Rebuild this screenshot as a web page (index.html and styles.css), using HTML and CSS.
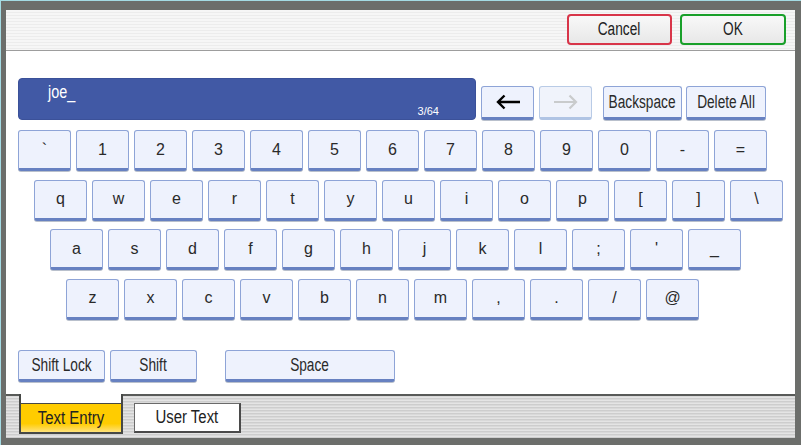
FILE: index.html
```html
<!DOCTYPE html>
<html>
<head>
<meta charset="utf-8">
<link rel="stylesheet" href="styles.css">
</head>
<body>
<div class="screen">
  <div class="inner">
    <div class="topbar">
      <div class="tbtn cancel"><span class="lbl">Cancel</span></div>
      <div class="tbtn ok"><span class="lbl">OK</span></div>
    </div>
    <div class="panel">
      <div class="entry-row">
        <div class="field">
          <span class="val lbl">joe_</span>
          <span class="count">3/64</span>
        </div>
        <div class="key arrow">
          <svg width="26" height="16" viewBox="0 0 26 16"><path d="M25 8H3M9.5 1.5L3 8l6.5 6.5" fill="none" stroke="#000" stroke-width="2.4"/></svg>
        </div>
        <div class="key arrow disabled">
          <svg width="26" height="16" viewBox="0 0 26 16"><path d="M1 8H23M16.5 1.5L23 8l-6.5 6.5" fill="none" stroke="#c9cbcc" stroke-width="2.2"/></svg>
        </div>
        <div class="key cmd bs"><span class="lbl">Backspace</span></div>
        <div class="key cmd da"><span class="lbl">Delete All</span></div>
      </div>
      <div class="keys">
        <div class="row r1">
          <div class="key">`</div><div class="key">1</div><div class="key">2</div><div class="key">3</div><div class="key">4</div><div class="key">5</div><div class="key">6</div><div class="key">7</div><div class="key">8</div><div class="key">9</div><div class="key">0</div><div class="key">-</div><div class="key">=</div>
        </div>
        <div class="row r2">
          <div class="key">q</div><div class="key">w</div><div class="key">e</div><div class="key">r</div><div class="key">t</div><div class="key">y</div><div class="key">u</div><div class="key">i</div><div class="key">o</div><div class="key">p</div><div class="key">[</div><div class="key">]</div><div class="key">\</div>
        </div>
        <div class="row r3">
          <div class="key">a</div><div class="key">s</div><div class="key">d</div><div class="key">f</div><div class="key">g</div><div class="key">h</div><div class="key">j</div><div class="key">k</div><div class="key">l</div><div class="key">;</div><div class="key">'</div><div class="key">_</div>
        </div>
        <div class="row r4">
          <div class="key">z</div><div class="key">x</div><div class="key">c</div><div class="key">v</div><div class="key">b</div><div class="key">n</div><div class="key">m</div><div class="key">,</div><div class="key">.</div><div class="key">/</div><div class="key">@</div>
        </div>
      </div>
      <div class="bottom-row">
        <div class="key mod"><span class="lbl">Shift Lock</span></div>
        <div class="key mod"><span class="lbl">Shift</span></div>
        <div class="key space"><span class="lbl">Space</span></div>
      </div>
    </div>
    <div class="tabs">
      <div class="tab active"><div class="tab-face"><span class="lbl wide">Text Entry</span></div></div>
      <div class="tab plain"><span class="lbl wide">User Text</span></div>
    </div>
  </div>
</div>
</body>
</html>
```

FILE: styles.css
```css
html, body {
  margin: 0;
  padding: 0;
}
body {
  width: 801px;
  height: 445px;
  overflow: hidden;
  background: #6c6e6b;
  font-family: "Liberation Sans", Arial, sans-serif;
  color: #222;
}
.lbl {
  display: inline-block;
  white-space: nowrap;
  transform: scaleX(0.76);
}
.lbl.wide {
  transform: scaleX(0.83);
}
.screen {
  box-sizing: border-box;
  width: 801px;
  height: 445px;
  border-top: 1px solid #a4dbe3;
  border-left: 1px solid #a4dbe3;
  padding: 9px 6px 7px 5px;
}
.inner {
  width: 789px;
  height: 428px;
  display: flex;
  flex-direction: column;
  background: #fff;
}
.topbar {
  box-sizing: border-box;
  height: 41px;
  flex: none;
  border-bottom: 1px solid #9d9d9d;
  background: repeating-linear-gradient(to bottom, #f6f6f6 0 2px, #ececec 2px 3px);
  display: flex;
  justify-content: flex-end;
  gap: 8px;
  padding: 4px 9px 0 0;
}
.tbtn {
  box-sizing: border-box;
  width: 105px;
  height: 31px;
  border-radius: 4px;
  background: linear-gradient(to bottom, #f8f8f8, #e8e8e8);
  display: flex;
  align-items: center;
  justify-content: center;
  font-size: 18px;
  color: #222;
}
.cancel { border: 2px solid #d83549; }
.ok { width: 106px; border: 2px solid #19a02a; }

.panel {
  box-sizing: border-box;
  height: 343px;
  flex: none;
  padding: 27px 0 0 12px;
}
.entry-row {
  display: flex;
  align-items: flex-end;
  height: 42px;
}
.field {
  box-sizing: border-box;
  width: 458px;
  height: 42px;
  background: #4159a5;
  border: 1px solid #3b5199;
  border-radius: 4px;
  display: flex;
  flex-direction: column;
  align-items: flex-start;
  padding: 3px 36px 1px 29px;
  color: #fff;
}
.val {
  font-size: 18px;
  line-height: 21px;
  transform: scaleX(0.8);
  transform-origin: left center;
}
.count {
  margin-top: auto;
  align-self: flex-end;
  font-size: 11px;
  line-height: 13px;
}
.key {
  box-sizing: border-box;
  width: 53px;
  height: 41px;
  flex: none;
  background: #eef2fd;
  border: 1px solid #8ea4d7;
  border-bottom: 3px solid #6781c1;
  border-radius: 3px;
  box-shadow: 0 1px 0 #b9c0cc;
  display: flex;
  align-items: center;
  justify-content: center;
  font-size: 16px;
  color: #2a2a2a;
}
.arrow {
  height: 34px;
  margin-left: 5px;
}
.arrow.disabled {
  background: #f0f3fb;
  border-color: #b9cbe6;
  border-bottom-color: #b0c4e4;
  box-shadow: none;
}
.cmd {
  height: 34px;
  font-size: 18px;
}
.bs { width: 79px; margin-left: 11px; }
.da { width: 80px; margin-left: 4px; }

.keys {
  margin-top: 10px;
  display: flex;
  flex-direction: column;
  gap: 8.5px;
}
.row {
  display: flex;
  gap: 5px;
}
.r2 { padding-left: 16px; }
.r3 { padding-left: 32px; }
.r4 { padding-left: 48px; }

.bottom-row {
  margin-top: 30.5px;
  display: flex;
  gap: 5px;
}
.mod {
  width: 87px;
  height: 32px;
  font-size: 18px;
}
.space {
  width: 170px;
  height: 32px;
  margin-left: 23px;
  font-size: 18px;
}

.tabs {
  flex: 1;
  border-top: 2px solid #585a58;
  background: repeating-linear-gradient(to bottom, #d9d9d9 0 1px, #e4e4e4 1px 2px, #cdcdcd 2px 3px);
  display: flex;
  align-items: flex-start;
  padding-left: 13px;
  gap: 11px;
}
.tab {
  box-sizing: border-box;
  font-size: 18px;
  color: #222;
}
.active {
  width: 104px;
  height: 40px;
  margin-top: -2px;
  background: #fff;
  border: 2px solid #464846;
  border-top: 0;
  padding-top: 9px;
}
.tab-face {
  height: 29px;
  box-sizing: border-box;
  border-top: 1px solid #464846;
  background: linear-gradient(to bottom, #ffcc00 0, #ffcc00 70%, #ffe27a 100%);
  display: flex;
  align-items: center;
  justify-content: center;
}
.plain {
  width: 107px;
  height: 30px;
  margin-top: 7px;
  background: #fff;
  border: 1px solid #6a6a6a;
  border-right: 2px solid #4a4a4a;
  border-bottom: 2px solid #4a4a4a;
  display: flex;
  align-items: center;
  justify-content: center;
}
```
